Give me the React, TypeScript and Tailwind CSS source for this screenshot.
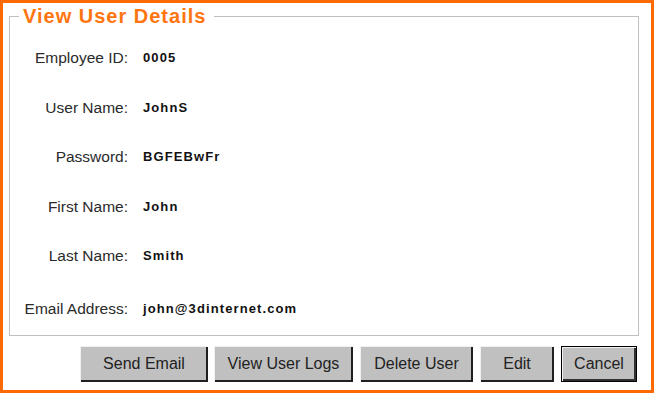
const fields: [string, string][] = [
  ['Employee ID:', '0005'],
  ['User Name:', 'JohnS'],
  ['Password:', 'BGFEBwFr'],
  ['First Name:', 'John'],
  ['Last Name:', 'Smith'],
  ['Email Address:', 'john@3dinternet.com'],
]

const buttons = [
  { label: 'Send Email', width: 'w-[128px] mr-[6px]' },
  { label: 'View User Logs', width: 'w-[139px] mr-[7px]' },
  { label: 'Delete User', width: 'w-[113px] mr-[7px]' },
  { label: 'Edit', width: 'w-[74px] mr-[7px]' },
]

function ClassicButton({ label, width, main }: { label: string; width: string; main?: boolean }) {
  return (
    <button
      className={`h-[36px] ${width} bg-[#c0c0c0] text-[16px] text-[#222] ${
        main
          ? 'border border-black shadow-[inset_1px_1px_0_#f0f0f0,inset_-2px_-2px_0_#303030]'
          : 'shadow-[inset_1px_1px_0_#f0f0f0,inset_-2px_-2px_0_#202020]'
      }`}
    >
      {label}
    </button>
  )
}

export default function App() {
  return (
    <div className="h-[395px] w-[657px] bg-white font-['Liberation_Sans',Arial,sans-serif]">
      <div className="flex h-[393px] w-[654px] flex-col border-[3px] border-[#ff6a00] bg-white px-[6px]">
        <fieldset className="mt-[1px] h-[332px] w-[630px] border border-[#bfbfbf] p-0">
          <legend className="ml-[9px] pl-[4px] pr-[8px] text-[20px] font-bold leading-[24px] tracking-[1px] text-[#ff7510]">
            View User Details
          </legend>
          <div className="flex flex-col pt-[5px]">
            {fields.map(([label, value], i) => (
              <div
                key={label}
                className={`flex items-center ${i === fields.length - 1 ? 'mt-[3px] h-[49.5px]' : 'h-[49.5px]'}`}
              >
                <span className="w-[118px] text-right text-[15.5px] text-[#2a2a2a]">{label}</span>
                <span className="ml-[15px] text-[13px] font-bold tracking-[1.1px] text-[#111]">{value}</span>
              </div>
            ))}
          </div>
        </fieldset>
        <div className="mt-[10px] flex justify-end pr-[8px]">
          {buttons.map(b => (
            <ClassicButton key={b.label} label={b.label} width={b.width} />
          ))}
          <ClassicButton label="Cancel" width="w-[76px]" main />
        </div>
      </div>
    </div>
  )
}
